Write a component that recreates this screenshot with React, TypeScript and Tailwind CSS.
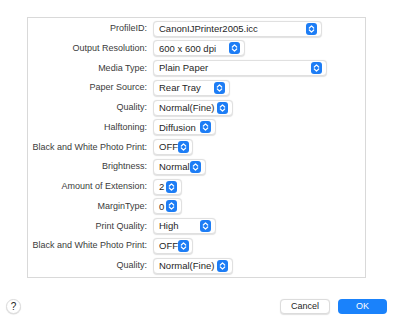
import React from 'react'

const rows: { label: string; value: string; width: number }[] = [
  { label: 'ProfileID:', value: 'CanonIJPrinter2005.icc', width: 169 },
  { label: 'Output Resolution:', value: '600 x 600 dpi', width: 92 },
  { label: 'Media Type:', value: 'Plain Paper', width: 174 },
  { label: 'Paper Source:', value: 'Rear Tray', width: 77 },
  { label: 'Quality:', value: 'Normal(Fine)', width: 80 },
  { label: 'Halftoning:', value: 'Diffusion', width: 63 },
  { label: 'Black and White Photo Print:', value: 'OFF', width: 40 },
  { label: 'Brightness:', value: 'Normal', width: 53 },
  { label: 'Amount of Extension:', value: '2', width: 29 },
  { label: 'MarginType:', value: '0', width: 29 },
  { label: 'Print Quality:', value: 'High', width: 63 },
  { label: 'Black and White Photo Print:', value: 'OFF', width: 40 },
  { label: 'Quality:', value: 'Normal(Fine)', width: 80 },
]

function Stepper() {
  return (
    <span className="flex h-[12px] w-[11px] items-center justify-center rounded-[3px] bg-[#1d7df5]">
      <svg width="11" height="12" viewBox="0 0 11 12" fill="none">
        <path d="M3.3 5 L5.5 2.9 L7.7 5" stroke="white" strokeWidth="1.2" strokeLinecap="round" strokeLinejoin="round" />
        <path d="M3.3 7 L5.5 9.1 L7.7 7" stroke="white" strokeWidth="1.2" strokeLinecap="round" strokeLinejoin="round" />
      </svg>
    </span>
  )
}

function Popup({ value, width }: { value: string; width: number }) {
  return (
    <div
      className="flex h-[16px] items-center justify-between rounded-[4px] border border-[#e0e0e0] bg-white pl-[5px] pr-[4px] shadow-[0_0.5px_1px_rgba(0,0,0,0.12)]"
      style={{ width }}
    >
      <span className="text-[9.5px] leading-none text-[#1f1f1f]">{value}</span>
      <Stepper />
    </div>
  )
}

export default function App() {
  return (
    <div className="relative h-[318px] w-[400px] bg-white font-['Liberation_Sans',Arial,sans-serif]">
      <div className="pt-[17px] pl-[27px]">
        {/* 设置面板 */}
        <div className="flex h-[261px] w-[339px] flex-col gap-[3.75px] border border-[#d9d9d9] bg-white pt-[2.5px]">
          {rows.map((r, i) => (
            <div key={i} className="flex h-[16px] items-center">
              <div className="w-[120px] pr-[1px] text-right text-[9px] leading-none text-[#3b3b3b]">{r.label}</div>
              <div className="ml-[5px]">
                <Popup value={r.value} width={r.width} />
              </div>
            </div>
          ))}
        </div>
      </div>

      {/* 底部按钮 */}
      <div className="mt-[21px] flex items-center justify-between pl-[6px] pr-[13px]">
        <div className="flex h-[15px] w-[15px] items-center justify-center rounded-full border border-[#dcdcdc] bg-white text-[10px] leading-none text-[#222] shadow-[0_0.5px_1px_rgba(0,0,0,0.15)]">
          ?
        </div>
        <div className="flex items-center gap-[8px]">
          <button className="flex h-[15px] w-[50px] items-center justify-center rounded-[4px] border border-[#dcdcdc] bg-white text-[9px] leading-none text-[#262626] shadow-[0_0.5px_1px_rgba(0,0,0,0.12)]">
            Cancel
          </button>
          <button className="flex h-[15px] w-[49px] items-center justify-center rounded-[4px] bg-[#1a82fb] text-[9px] leading-none text-white">
            OK
          </button>
        </div>
      </div>
    </div>
  )
}
